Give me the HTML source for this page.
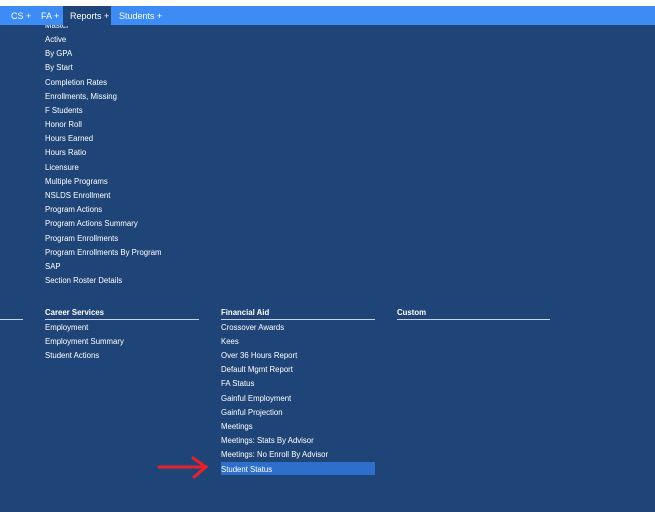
<!DOCTYPE html>
<html><head><style>
body{margin:0;width:655px;height:512px;background:#1f4578;font-family:"Liberation Sans",sans-serif;position:relative;overflow:hidden;color:#fff}
.top{position:absolute;left:0;top:0;width:655px;height:6px;background:#fff;z-index:3}
.bar{position:absolute;left:0;top:6px;width:655px;height:19px;background:#3d8bf5;z-index:2}
.bar span{position:absolute;top:5px;font-size:9px;color:#fff}
.rep{position:absolute;left:63px;top:6px;width:48px;height:20px;background:#1f4578;z-index:2}
.i{position:absolute;font-size:7.8px;white-space:nowrap;color:#fff;margin-top:1px}
.h{position:absolute;font-size:7.8px;font-weight:bold;margin-top:1px}
.ln{position:absolute;height:1px;background:#c8d4e6;top:319px}
.hl{position:absolute;left:221px;top:462px;width:154px;height:13px;background:#2f6fcc}
</style></head><body>
<div class="top"></div><div class="bar"></div><div class="rep"></div>
<div class="bar" style="background:none;z-index:4"><span style="left:11px">CS +</span><span style="left:41px">FA +</span><span style="left:70px">Reports +</span><span style="left:119px">Students +</span></div>
<div class="i" style="left:45px;top:20px">Master</div>
<div class="i" style="left:45px;top:34px">Active</div>
<div class="i" style="left:45px;top:48px">By GPA</div>
<div class="i" style="left:45px;top:62px">By Start</div>
<div class="i" style="left:45px;top:77px">Completion Rates</div>
<div class="i" style="left:45px;top:91px">Enrollments, Missing</div>
<div class="i" style="left:45px;top:105px">F Students</div>
<div class="i" style="left:45px;top:119px">Honor Roll</div>
<div class="i" style="left:45px;top:133px">Hours Earned</div>
<div class="i" style="left:45px;top:147px">Hours Ratio</div>
<div class="i" style="left:45px;top:162px">Licensure</div>
<div class="i" style="left:45px;top:176px">Multiple Programs</div>
<div class="i" style="left:45px;top:190px">NSLDS Enrollment</div>
<div class="i" style="left:45px;top:204px">Program Actions</div>
<div class="i" style="left:45px;top:218px">Program Actions Summary</div>
<div class="i" style="left:45px;top:233px">Program Enrollments</div>
<div class="i" style="left:45px;top:247px">Program Enrollments By Program</div>
<div class="i" style="left:45px;top:261px">SAP</div>
<div class="i" style="left:45px;top:275px">Section Roster Details</div>
<div class="ln" style="left:0;width:23px"></div>
<div class="ln" style="left:45px;width:154px"></div>
<div class="ln" style="left:221px;width:154px"></div>
<div class="ln" style="left:397px;width:153px"></div>
<div class="h" style="left:45px;top:307px">Career Services</div>
<div class="h" style="left:221px;top:307px">Financial Aid</div>
<div class="h" style="left:397px;top:307px">Custom</div>
<div class="i" style="left:45px;top:322px">Employment</div>
<div class="i" style="left:45px;top:336px">Employment Summary</div>
<div class="i" style="left:45px;top:350px">Student Actions</div>
<div class="hl"></div>
<div class="i" style="left:221px;top:322px">Crossover Awards</div>
<div class="i" style="left:221px;top:336px">Kees</div>
<div class="i" style="left:221px;top:350px">Over 36 Hours Report</div>
<div class="i" style="left:221px;top:364px">Default Mgmt Report</div>
<div class="i" style="left:221px;top:378px">FA Status</div>
<div class="i" style="left:221px;top:393px">Gainful Employment</div>
<div class="i" style="left:221px;top:407px">Gainful Projection</div>
<div class="i" style="left:221px;top:421px">Meetings</div>
<div class="i" style="left:221px;top:435px">Meetings: Stats By Advisor</div>
<div class="i" style="left:221px;top:449px">Meetings: No Enroll By Advisor</div>
<div class="i" style="left:221px;top:464px">Student Status</div>
<svg style="position:absolute;left:155px;top:456px" width="56" height="24"><path d="M4 11 L51 11 M38 2 L51 11 L39 21" stroke="#e8202a" stroke-width="3" fill="none" stroke-linecap="round"/></svg>
</body></html>
